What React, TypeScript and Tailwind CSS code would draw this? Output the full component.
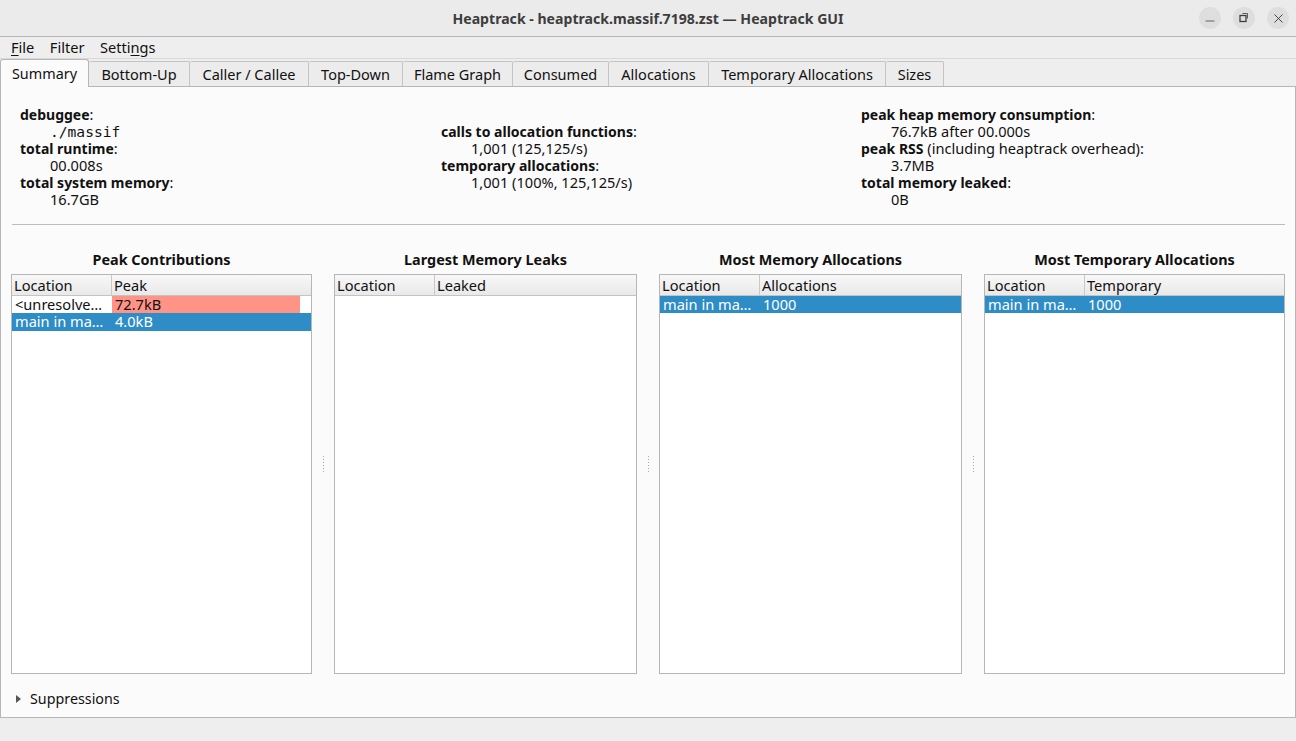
import type { ReactNode } from 'react'
import { Minus, X } from 'lucide-react'

const font = "[font-family:'Noto_Sans',sans-serif]"

type Row = { name: string; value: string; selected?: boolean; bar?: boolean }

const tabs = [
  { label: 'Bottom-Up', w: 'w-[101px]' },
  { label: 'Caller / Callee', w: 'w-[119px]' },
  { label: 'Top-Down', w: 'w-[94px]' },
  { label: 'Flame Graph', w: 'w-[110px]' },
  { label: 'Consumed', w: 'w-[96px]' },
  { label: 'Allocations', w: 'w-[100px]' },
  { label: 'Temporary Allocations', w: 'w-[177px]' },
  { label: 'Sizes', w: 'w-[58px]' },
]

const TitleBar = () => (
  <div className="relative flex h-[37px] items-center justify-center border-b border-[#b6b6b6] bg-[#ebebeb] pt-px">
    <span className="text-[14.1px] font-bold text-[#3d3d3d]">
      Heaptrack - heaptrack.massif.7198.zst — Heaptrack GUI
    </span>
    <div className="absolute right-[7px] top-[7px] flex gap-[12px]">
      <button className="flex h-[22px] w-[22px] items-center justify-center rounded-full bg-[#dedede] text-[#3d3d3d]">
        <Minus size={14} strokeWidth={1.3} className="mt-[5px]" />
      </button>
      <button className="flex h-[22px] w-[22px] items-center justify-center rounded-full bg-[#dedede]">
        <svg width="10" height="10" viewBox="0 0 10 10" fill="none" stroke="#3d3d3d">
          <rect x="1" y="2.5" width="6" height="6" strokeWidth="1.3" />
          <path d="M3.5 0.5H8.5V5.5" strokeWidth="0.8" />
        </svg>
      </button>
      <button className="flex h-[22px] w-[22px] items-center justify-center rounded-full bg-[#dedede] text-[#3d3d3d]">
        <X size={15} strokeWidth={1.5} />
      </button>
    </div>
  </div>
)

const MenuBar = () => (
  <div className="flex h-[22px] items-center gap-[15.5px] border-b border-[#d9d9d9] pl-[11px] text-[14.6px] text-[#111]">
    <span>
      <span className="underline underline-offset-2">F</span>ile
    </span>
    <span>Filter</span>
    <span>
      Setti<span className="underline underline-offset-2">n</span>gs
    </span>
  </div>
)

const TabBar = () => (
  <div className="flex h-[27px] items-end">
    <div className="z-10 mb-[-1px] flex h-[28px] w-[89px] items-center justify-center rounded-t-[3px] border border-b-0 border-[#b6b6b6] bg-[#fbfbfb] text-[14.4px] text-[#111]">
      Summary
    </div>
    {tabs.map((t) => (
      <div
        key={t.label}
        className={`flex h-[25px] items-center justify-center rounded-t-[2px] border-r border-t border-[#c4c4c4] bg-[#ececec] pt-px text-[14.5px] text-[#111] ${t.w}`}
      >
        {t.label}
      </div>
    ))}
  </div>
)

const Info = ({ children }: { children: ReactNode }) => <div className="pl-[30px]">{children}</div>

const Summary = () => (
  <div className="ml-[11px] mr-[10px] grid h-[138px] grid-cols-[421px_420px_1fr] border-b border-[#bdbdbd] pl-[8px] pt-[19px] text-[14.6px] leading-[17px] text-[#111]">
    <div>
      <div>
        <b className="text-[14px]">debuggee</b>:
      </div>
      <Info>
        <span className="font-['DejaVu_Sans_Mono',monospace]">./massif</span>
      </Info>
      <div>
        <b className="text-[14px]">total runtime</b>:
      </div>
      <Info>00.008s</Info>
      <div>
        <b className="text-[14px]">total system memory</b>:
      </div>
      <Info>16.7GB</Info>
    </div>
    <div className="pt-[17px]">
      <div>
        <b className="text-[14px]">calls to allocation functions</b>:
      </div>
      <Info>1,001 (125,125/s)</Info>
      <div>
        <b className="text-[14px]">temporary allocations</b>:
      </div>
      <Info>1,001 (100%, 125,125/s)</Info>
    </div>
    <div>
      <div>
        <b className="text-[14px]">peak heap memory consumption</b>:
      </div>
      <Info>76.7kB after 00.000s</Info>
      <div>
        <b className="text-[14px]">peak RSS</b> (including heaptrack overhead):
      </div>
      <Info>3.7MB</Info>
      <div>
        <b className="text-[14px]">total memory leaked</b>:
      </div>
      <Info>0B</Info>
    </div>
  </div>
)

const Table = ({
  title,
  col,
  rows,
  className,
}: {
  title: string
  col: string
  rows: Row[]
  className: string
}) => (
  <div className={`flex flex-col ${className}`}>
    <div className="flex h-[49px] items-center justify-center pt-[21px] text-[14.4px] font-bold text-[#111]">{title}</div>
    <div className="flex h-[400px] flex-col border border-[#b6b6b6] bg-white text-[14.6px] text-[#111]">
      <div className="flex h-[21px] shrink-0 border-b border-[#c4c4c4] bg-gradient-to-b from-[#f8f8f8] to-[#e9e9e9] leading-[21px]">
        <div className="w-[100px] border-r border-[#c9c9c9] pl-[2px]">Location</div>
        <div className="pl-[2px]">{col}</div>
      </div>
      {rows.map((r) => (
        <div
          key={r.name}
          className={`flex h-[17.3px] items-center leading-[17px] ${r.selected ? 'bg-[#2e8cc6] text-white' : ''}`}
        >
          <div className="w-[100px] truncate pl-[3px] pr-[4px]">{r.name}</div>
          <div className="flex-1 self-stretch pr-[11px]">
            <div className={`h-full pl-[3px] ${r.bar ? 'bg-[#ff9385]' : ''}`}>{r.value}</div>
          </div>
        </div>
      ))}
    </div>
  </div>
)

const Splitter = () => (
  <div className="flex w-[22px] flex-col items-center gap-[2px] pt-[231px]">
    {[0, 1, 2, 3, 4, 5].map((i) => (
      <div key={i} className="h-px w-px bg-[#a8a8a8]" />
    ))}
  </div>
)

export default function App() {
  return (
    <div className={`flex h-[741px] w-[1296px] flex-col overflow-hidden bg-[#eeeeee] ${font}`}>
      <TitleBar />
      <MenuBar />
      <TabBar />
      <div className="flex h-[632px] flex-col border border-[#b6b6b6] bg-[#fbfbfb]">
        <Summary />
        <div className="flex pl-[10px] pr-[10px]">
          <Table
            title="Peak Contributions"
            col="Peak"
            className="w-[301px]"
            rows={[
              { name: '<unresolved function>', value: '72.7kB', bar: true },
              { name: 'main in massif', value: '4.0kB', selected: true },
            ]}
          />
          <Splitter />
          <Table title="Largest Memory Leaks" col="Leaked" className="w-[303px]" rows={[]} />
          <Splitter />
          <Table
            title="Most Memory Allocations"
            col="Allocations"
            className="w-[303px]"
            rows={[{ name: 'main in massif', value: '1000', selected: true }]}
          />
          <Splitter />
          <Table
            title="Most Temporary Allocations"
            col="Temporary"
            className="w-[301px]"
            rows={[{ name: 'main in massif', value: '1000', selected: true }]}
          />
        </div>
        <div className="flex h-[42px] items-center pl-[15px] pt-[7px] text-[14.3px] text-[#111]">
          <svg width="5" height="8" viewBox="0 0 5 8" className="mr-[9px]">
            <path d="M0 0L5 4L0 8Z" fill="#555" />
          </svg>
          Suppressions
        </div>
      </div>
    </div>
  )
}
